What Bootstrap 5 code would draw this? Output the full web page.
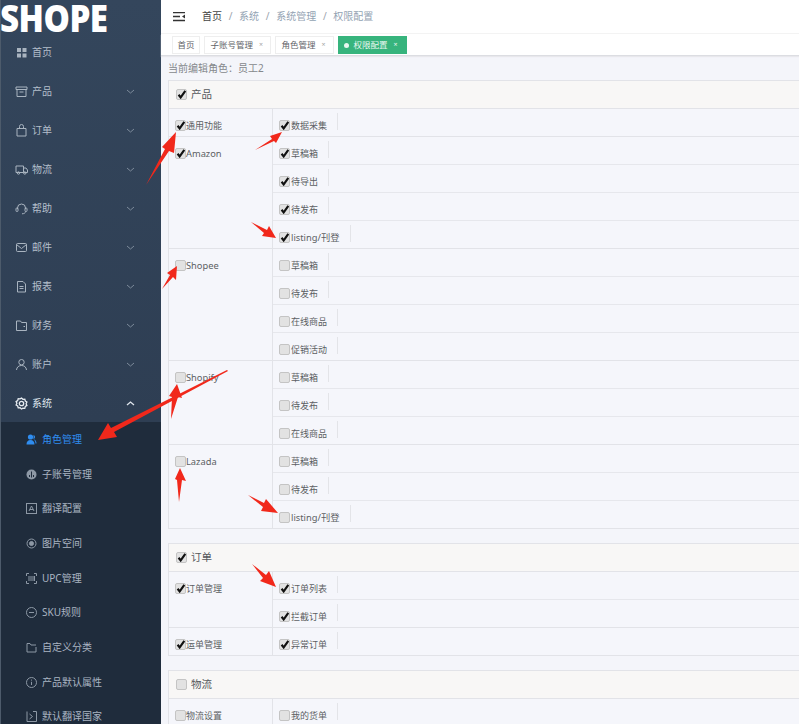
<!DOCTYPE html>
<html lang="zh"><head><meta charset="utf-8"><title>权限配置</title>
<link href="https://cdn.jsdelivr.net/npm/bootstrap@5.3.0/dist/css/bootstrap.min.css" rel="stylesheet">
<style>
html,body{height:724px;overflow:hidden}
body{font-family:"Noto Sans","Noto Sans CJK SC",sans-serif;font-size:9px;color:#5c5f63;background:#f4f5fa}
.shell{height:724px;position:relative;overflow:hidden}
.side{width:161px;flex:none;background:linear-gradient(#34465c,#2e3e53 420px);border-left:1px solid #4d5b6b;color:#b4bfcb;font-size:10px;overflow:hidden}
.logo{height:33px;flex:none;margin-left:-1px;padding-top:2px;font-family:"Open Sans",sans-serif;font-weight:800;font-size:37.500px;line-height:31px;color:#fff;letter-spacing:-.6px;white-space:nowrap;transform:scaleX(.885);transform-origin:0 0}
.mitem{height:39px;flex:none;padding-left:14px;padding-right:26px;gap:4px}
.mitem svg{width:13px;height:13px;flex:none;fill:none;stroke:#a9b4c0;stroke-width:1}
.mitem svg.chev{width:9px;height:9px;margin-left:auto;stroke:#7d8b9b}
.mitem.cur{height:38px;color:#dfe5ec}
.mitem.cur svg{stroke:#e6ebf0;stroke-width:1.3}
.mitem.cur svg.chev{stroke:#dfe5ec}
.subm{background:#1f2c3c;flex:none;height:320px}
.sitem{height:34.700px;padding-left:25px;gap:5px;color:#aab5c2;font-size:10px;white-space:nowrap}
.sitem svg{width:11px;height:11px;flex:none;fill:none;stroke:#8d98a5;stroke-width:1}
.sitem.on{color:#2f8df0}
.sitem.on svg{fill:#2f8df0;stroke:none}
.mainc{min-width:0}
.topb{height:34px;flex:none;background:#fff;padding-left:12px;gap:17px;font-size:10px;border-bottom:1px solid #f3f3f3}
.crumbs{--bs-breadcrumb-divider-color:#9aa4ae;--bs-breadcrumb-item-padding-x:6.700px;--bs-breadcrumb-margin-bottom:0;font-size:10px}
.crumbs .breadcrumb-item{color:#93a3b3}
.crumbs .breadcrumb-item:first-child{color:#444}
.tabsb{height:22px;flex:none;background:#fff;padding:2px 0 0 11px;gap:4px;border-bottom:1px solid #dcdde2;box-shadow:0 1px 1px #e8e8ec;font-size:8.500px}
.tabi{height:18px;padding:0 7px 0 5.500px;border:1px solid #eeeeee;background:#fff;color:#5f6368;gap:6px;white-space:nowrap}
.tabi.solo{padding:0 4.500px}
.tabi i{font-style:normal;font-size:7px;color:#a5a5a5}
.tabi.act{background:#37b47d;border-color:#37b47d;color:#e8f7f0;gap:5px;padding:0 8px 0 5px}
.tabi.act i{color:#e8f7f0;margin-left:1px}
.dotg{width:5px;height:5px;border-radius:50%;background:#e8f7f0}
.bodyz{padding:5px 0 0 7px}
.who{height:19px;color:#85888c;font-size:10px;line-height:15px}
.pane{border:1px solid #e2e3e8;border-right:0;margin-bottom:14px;background:#f5f6fb}
.phead{height:28px;background:#f8f7f6;border-bottom:1px solid #e2e3e8;padding-left:7px;gap:3px;font-size:10.500px;color:#55585c}
.prow{border-bottom:1px solid #e2e3e8}
.prow:last-child{border-bottom:0}
.lcol{width:104px;flex:none;border-right:1px solid #e2e3e8;padding:11px 0 0 6px;line-height:11px}
.rc{height:28px;padding:4px 0 0 6px;border-bottom:1px solid #e6e7ec}
.rc:last-child{height:27px;border-bottom:0}
.rc>span{height:17px;padding-right:10px;padding-top:7px;border-right:1px solid #e3e4e8;display:flex;align-items:center}
.lab{white-space:nowrap;line-height:11px}
.lcol .lab{display:flex}
.lat{font-size:9.300px}
input.cbx{appearance:none;-webkit-appearance:none;width:11px;height:11px;margin:0 1px 0 0;flex:none;border:1px solid #c4c4c4;border-radius:2px;background:#e2e2e2 center/10px 10px no-repeat}
input.cbx:checked{background-image:url("data:image/svg+xml,%3Csvg xmlns='http://www.w3.org/2000/svg' viewBox='0 0 10 10'%3E%3Cpath d='M2 5l2 2.600L8.400 1.400' fill='none' stroke='%23111' stroke-width='2'/%3E%3C/svg%3E")}
.lcol input.cbx{margin-right:0}
.arrows{position:absolute;left:0;top:0;width:799px;height:724px;pointer-events:none}
.arrows polygon{fill:#f1281b}
</style></head><body>
<div class="shell d-flex">
<aside class="side d-flex flex-column">
<div class="logo">SHOPE</div>
<div class="mitem d-flex align-items-center"><svg viewBox="0 0 13 13"><path fill="#a9b4c0" stroke="none" d="M2 2h4v4H2zM7.500 2h4v4h-4zM2 7.500h4v4H2zM7.500 7.500h4v4h-4z"/></svg>首页</div>
<div class="mitem d-flex align-items-center"><svg viewBox="0 0 13 13"><path d="M1 2h11v2.500H1zM2 4.500V11.500h9V4.500M4.500 7h4"/></svg>产品<svg class="chev" viewBox="0 0 9 9"><path d="M1 3l3.500 3L8 3"/></svg></div>
<div class="mitem d-flex align-items-center"><svg viewBox="0 0 13 13"><path d="M2 4.500h9v7.500H2zM4.500 4.500V2.500a2 2 0 014 0v2"/></svg>订单<svg class="chev" viewBox="0 0 9 9"><path d="M1 3l3.500 3L8 3"/></svg></div>
<div class="mitem d-flex align-items-center"><svg viewBox="0 0 13 13"><path d="M1 3h7.500v6.500H1zM8.500 5H11l1.500 2v2.500h-4"/><circle cx="3.500" cy="10" r="1.200"/><circle cx="9.800" cy="10" r="1.200"/></svg>物流<svg class="chev" viewBox="0 0 9 9"><path d="M1 3l3.500 3L8 3"/></svg></div>
<div class="mitem d-flex align-items-center"><svg viewBox="0 0 13 13"><path d="M2.500 7V6a4 4 0 018 0v1M10.500 9.500c0 1.500-1.500 2.300-3.500 2.300"/><rect x="1" y="6" width="2" height="3.500" rx=".8"/><rect x="10" y="6" width="2" height="3.500" rx=".8"/></svg>帮助<svg class="chev" viewBox="0 0 9 9"><path d="M1 3l3.500 3L8 3"/></svg></div>
<div class="mitem d-flex align-items-center"><svg viewBox="0 0 13 13"><rect x="1.500" y="2.500" width="10" height="8" rx="1"/><path d="M1.500 3.500l5 4 5-4"/></svg>邮件<svg class="chev" viewBox="0 0 9 9"><path d="M1 3l3.500 3L8 3"/></svg></div>
<div class="mitem d-flex align-items-center"><svg viewBox="0 0 13 13"><path d="M2.500 1.500h5.500l2.500 2.500v8h-8zM4.500 6.500h4M4.500 8.500h4"/></svg>报表<svg class="chev" viewBox="0 0 9 9"><path d="M1 3l3.500 3L8 3"/></svg></div>
<div class="mitem d-flex align-items-center"><svg viewBox="0 0 13 13"><path d="M1.500 2h4l1 1.500h5V11.500h-10zM8.500 7.500h1.500"/></svg>财务<svg class="chev" viewBox="0 0 9 9"><path d="M1 3l3.500 3L8 3"/></svg></div>
<div class="mitem d-flex align-items-center"><svg viewBox="0 0 13 13"><circle cx="6.500" cy="4.200" r="2.700"/><path d="M1.500 12c.3-3 2.300-4.500 5-4.500s4.700 1.500 5 4.500"/></svg>账户<svg class="chev" viewBox="0 0 9 9"><path d="M1 3l3.500 3L8 3"/></svg></div>
<div class="mitem cur d-flex align-items-center"><svg viewBox="0 0 13 13"><path d="M6.500 1l1.400 1.300 1.900-.2.500 1.900 1.600 1-.8 1.700.8 1.700-1.600 1-.5 1.900-1.900-.2L6.500 12l-1.400-1.300-1.900.2-.5-1.900-1.600-1 .8-1.700-.8-1.700 1.600-1 .5-1.900 1.900.2z"/><circle cx="6.500" cy="6.500" r="2.200"/></svg>系统<svg class="chev" viewBox="0 0 9 9"><path d="M1 6l3.500-3L8 6"/></svg></div>
<div class="subm">
<div class="sitem on d-flex align-items-center"><svg viewBox="0 0 11 11"><circle cx="4.500" cy="3" r="2.600"/><path d="M.5 10.500C.5 7.500 2 6 4.500 6s4 1.500 4 4.500zM7.500 1a2.200 2.200 0 010 4.200c2 .5 3 2 3 4.300h-1c0-2-1-3.500-2-4.200z"/></svg>角色管理</div>
<div class="sitem d-flex align-items-center"><svg viewBox="0 0 11 11"><circle cx="5.500" cy="5.500" r="5" fill="#8d98a5" stroke="none"/><path d="M5.500 2.500v6M3.500 8V6M7.500 8V6" stroke="#1f2c3c"/></svg>子账号管理</div>
<div class="sitem d-flex align-items-center"><svg viewBox="0 0 11 11"><rect x=".5" y=".5" width="10" height="10"/><path d="M3 8l2.500-5L8 8M3.800 6.500h3.400"/></svg>翻译配置</div>
<div class="sitem d-flex align-items-center"><svg viewBox="0 0 11 11"><circle cx="5.500" cy="5.500" r="4.500"/><circle cx="5.500" cy="5.500" r="2" fill="#8d98a5"/></svg>图片空间</div>
<div class="sitem d-flex align-items-center"><svg viewBox="0 0 11 11"><path d="M.5 3V.5H3M8 .5h2.500V3M.5 8v2.500H3M10.500 8v2.500H8M3 3v5M5 3v5M7 3v5M8.500 3v5"/></svg>UPC管理</div>
<div class="sitem d-flex align-items-center"><svg viewBox="0 0 11 11"><circle cx="5.500" cy="5.500" r="5"/><path d="M3 5.500h5"/></svg>SKU规则</div>
<div class="sitem d-flex align-items-center"><svg viewBox="0 0 11 11"><path d="M1 10V1.500h3l1 1.500h5M1 10h9V5"/></svg>自定义分类</div>
<div class="sitem d-flex align-items-center"><svg viewBox="0 0 11 11"><circle cx="5.500" cy="5.500" r="5"/><path d="M5.500 4.800v3.200M5.500 2.600v1"/></svg>产品默认属性</div>
<div class="sitem d-flex align-items-center"><svg viewBox="0 0 11 11"><path d="M1 .5v10h9.500V.5H7M3.500 3l3 2.500-3 2.500"/></svg>默认翻译国家</div>
</div>
</aside>
<main class="mainc flex-grow-1 d-flex flex-column">
<div class="topb d-flex align-items-center">
<svg width="12" height="10" viewBox="0 0 12 10"><path d="M0 .5h12M0 4.500h7M0 8.500h12" stroke="#333" stroke-width="1.300"/><path d="M12 2.500v4L9 4.500z" fill="#333"/></svg>
<nav aria-label="breadcrumb"><ol class="breadcrumb crumbs"><li class="breadcrumb-item">首页</li><li class="breadcrumb-item">系统</li><li class="breadcrumb-item">系统管理</li><li class="breadcrumb-item active">权限配置</li></ol></nav>
</div>
<div class="tabsb d-flex">
<div class="tabi solo d-flex align-items-center">首页</div>
<div class="tabi d-flex align-items-center">子账号管理<i>×</i></div>
<div class="tabi d-flex align-items-center">角色管理<i>×</i></div>
<div class="tabi act d-flex align-items-center"><span class="dotg"></span>权限配置<i>×</i></div>
</div>
<div class="bodyz">
<div class="who">当前编辑角色：员工2</div>

<section class="pane">
<div class="phead d-flex align-items-center"><input class="cbx" type="checkbox" checked> 产品</div>
<div class="prow d-flex"><div class="lcol"><label class="lab"><input class="cbx" type="checkbox" checked>通用功能</label></div><div class="flex-grow-1">
<div class="rc d-flex"><span><input class="cbx" type="checkbox" checked><label class="lab">数据采集</label></span></div></div></div>
<div class="prow d-flex"><div class="lcol"><label class="lab lat"><input class="cbx" type="checkbox" checked>Amazon</label></div><div class="flex-grow-1">
<div class="rc d-flex"><span><input class="cbx" type="checkbox" checked><label class="lab">草稿箱</label></span></div>
<div class="rc d-flex"><span><input class="cbx" type="checkbox" checked><label class="lab">待导出</label></span></div>
<div class="rc d-flex"><span><input class="cbx" type="checkbox" checked><label class="lab">待发布</label></span></div>
<div class="rc d-flex"><span><input class="cbx" type="checkbox" checked><label class="lab lat">listing/刊登</label></span></div></div></div>
<div class="prow d-flex"><div class="lcol"><label class="lab lat"><input class="cbx" type="checkbox">Shopee</label></div><div class="flex-grow-1">
<div class="rc d-flex"><span><input class="cbx" type="checkbox"><label class="lab">草稿箱</label></span></div>
<div class="rc d-flex"><span><input class="cbx" type="checkbox"><label class="lab">待发布</label></span></div>
<div class="rc d-flex"><span><input class="cbx" type="checkbox"><label class="lab">在线商品</label></span></div>
<div class="rc d-flex"><span><input class="cbx" type="checkbox"><label class="lab">促销活动</label></span></div></div></div>
<div class="prow d-flex"><div class="lcol"><label class="lab lat"><input class="cbx" type="checkbox">Shopify</label></div><div class="flex-grow-1">
<div class="rc d-flex"><span><input class="cbx" type="checkbox"><label class="lab">草稿箱</label></span></div>
<div class="rc d-flex"><span><input class="cbx" type="checkbox"><label class="lab">待发布</label></span></div>
<div class="rc d-flex"><span><input class="cbx" type="checkbox"><label class="lab">在线商品</label></span></div></div></div>
<div class="prow d-flex"><div class="lcol"><label class="lab lat"><input class="cbx" type="checkbox">Lazada</label></div><div class="flex-grow-1">
<div class="rc d-flex"><span><input class="cbx" type="checkbox"><label class="lab">草稿箱</label></span></div>
<div class="rc d-flex"><span><input class="cbx" type="checkbox"><label class="lab">待发布</label></span></div>
<div class="rc d-flex"><span><input class="cbx" type="checkbox"><label class="lab lat">listing/刊登</label></span></div></div></div>
</section>

<section class="pane">
<div class="phead d-flex align-items-center"><input class="cbx" type="checkbox" checked> 订单</div>
<div class="prow d-flex"><div class="lcol"><label class="lab"><input class="cbx" type="checkbox" checked>订单管理</label></div><div class="flex-grow-1">
<div class="rc d-flex"><span><input class="cbx" type="checkbox" checked><label class="lab">订单列表</label></span></div>
<div class="rc d-flex"><span><input class="cbx" type="checkbox" checked><label class="lab">拦截订单</label></span></div></div></div>
<div class="prow d-flex"><div class="lcol"><label class="lab"><input class="cbx" type="checkbox" checked>运单管理</label></div><div class="flex-grow-1">
<div class="rc d-flex"><span><input class="cbx" type="checkbox" checked><label class="lab">异常订单</label></span></div></div></div>
</section>

<section class="pane">
<div class="phead d-flex align-items-center"><input class="cbx" type="checkbox"> 物流</div>
<div class="prow d-flex"><div class="lcol"><label class="lab"><input class="cbx" type="checkbox">物流设置</label></div><div class="flex-grow-1">
<div class="rc d-flex"><span><input class="cbx" type="checkbox"><label class="lab">我的货单</label></span></div></div></div>
</section>
</div>
</main>
<svg class="arrows" viewBox="0 0 799 724">
<polygon points="146,185 165,149 162,147 176,132 174,153 169,151"/>
<polygon points="255,150 272,139 270,136 282,132 276,143 274,141"/>
<polygon points="251,222 267,230 269,226 276,238 262,236 264,233"/>
<polygon points="162,289 170,275 167,273 177,266 176,280 173,277"/>
<polygon points="227,370 228,371 114,432 117,437 98,440 108,423 111,428"/>
<polygon points="171,419 172,397 169,396 177,384 182,398 178,397"/>
<polygon points="179,502 177,480 175,479 180,468 186,481 182,480"/>
<polygon points="248,495 264,503 266,499 278,513 261,511 263,507"/>
<polygon points="252,564 266,575 269,571 276,587 260,581 263,578"/>
</svg>
</div>
</body></html>
